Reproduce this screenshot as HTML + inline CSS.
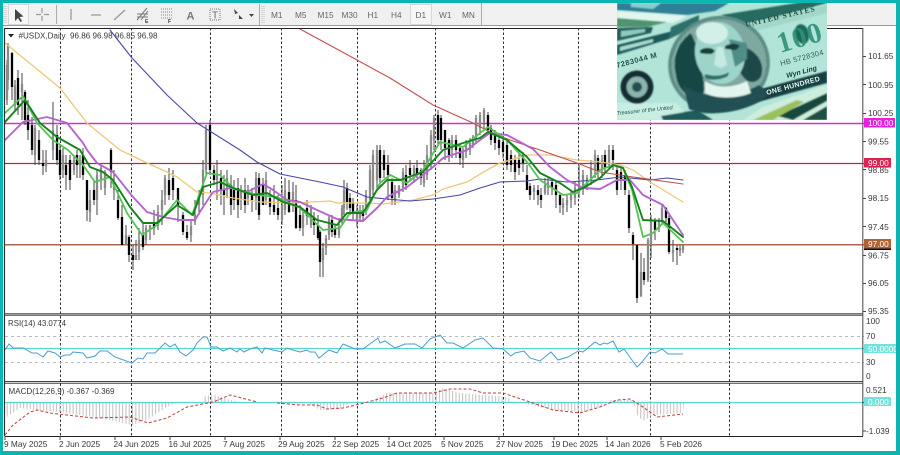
<!DOCTYPE html>
<html><head><meta charset="utf-8"><style>
html,body{margin:0;padding:0;background:#fff;width:900px;height:455px;overflow:hidden}
svg{display:block}
text{font-family:"Liberation Sans",sans-serif;font-size:8.3px;fill:#383838}
.t text{fill:#fff}
.s{font-size:7.9px}
</style></head><body>
<svg width="900" height="455" viewBox="0 0 900 455" xmlns="http://www.w3.org/2000/svg">
<defs>
<pattern id="h" width="3.3" height="10" patternUnits="userSpaceOnUse"><rect width="1.1" height="10" fill="#c4c4c4"/></pattern>
<pattern id="hatch" width="2.4" height="2.4" patternUnits="userSpaceOnUse" patternTransform="rotate(35)"><rect width="1" height="2.4" fill="#174441" opacity=".38"/></pattern>
<filter id="b" x="-5%" y="-5%" width="110%" height="110%"><feGaussianBlur stdDeviation="0.35"/></filter>
<filter id="b2"><feGaussianBlur stdDeviation="0.8"/></filter>
</defs>
<rect width="900" height="455" fill="#fff"/>
<!-- toolbar -->
<rect x="3" y="3" width="893" height="22" fill="#f0f0f0"/>
<rect x="3" y="25" width="893" height="1" fill="#9a9a9a"/>
<g filter="url(#b)">
<path d="M4 6v17M6 6v17M262 6v17M264 6v17" stroke="#bbb" stroke-dasharray="1 1" fill="none"/>
<rect x="8.500" y="4.500" width="20" height="20" fill="#f6f6f6" stroke="#d6d6d6"/>
<path d="M15 9l0 12 3-3 2.500 4 1.500-1-2.500-4 4-.5z" fill="#444"/>
<path d="M42 8v5M42 16v5M36 14.500h5M44 14.500h5" stroke="#999" fill="none" stroke-width="1.200"/>
<path d="M56.500 5v19M259.500 4v21M481.500 3v22" stroke="#aaa" fill="none"/>
<path d="M71 9v11M91 15h10M114 20l11-10" stroke="#999" stroke-width="1.300" fill="none"/>
<path d="M137 20l10-12M141 20l7-9M137 14h11M137 17h11" stroke="#777" fill="none"/>
<text x="145" y="23" style="font-size:5px;font-weight:bold">E</text>
<path d="M161 9h12M161 12h12M161 15h12M161 18h12" stroke="#888" stroke-dasharray="1 1" fill="none"/>
<text x="168" y="23" style="font-size:5px;font-weight:bold">F</text>
<text x="186.500" y="19.500" style="font-size:11px;font-weight:bold;fill:#777">A</text>
<rect x="210" y="9" width="10" height="11" fill="none" stroke="#777" stroke-dasharray="1 1"/>
<text x="212" y="18.500" style="font-size:10px;fill:#666">T</text>
<path d="M234 9l4 4-3 1zM239 15l4 4-4 0zM249 14h5l-2.500 3z" fill="#444"/>
<rect x="410.500" y="4.500" width="21" height="20" fill="#f6f6f6" stroke="#d6d6d6"/>
<g><text x="271" y="18" style="fill:#666">M1</text><text x="295" y="18" style="fill:#666">M5</text><text x="317.500" y="18" style="fill:#666">M15</text><text x="341.500" y="18" style="fill:#666">M30</text><text x="367.500" y="18" style="fill:#666">H1</text><text x="391" y="18" style="fill:#666">H4</text><text x="415.500" y="18" style="fill:#666">D1</text><text x="439" y="18" style="fill:#666">W1</text><text x="462" y="18" style="fill:#666">MN</text></g>
</g>
<!-- grid -->
<g filter="url(#b)">
<path d="M60.500 28V436M131.500 28V436M210.500 28V436M281.500 28V436M357.500 28V436M435.500 28V436M503.500 28V436M578.500 28V436M650.500 28V436M729.500 28V436" stroke="#333" stroke-dasharray="2.500 2" fill="none"/>
<!-- levels -->
<path d="M5 123.500H864" stroke="#d030d0" stroke-width="1.400"/>
<path d="M5 163.500H864" stroke="#b02a50" stroke-width="1.300"/>
<path d="M5 244.800H864" stroke="#a86a4e" stroke-width="1.500"/>
<!-- candles wicks -->
<path stroke="#444" stroke-width="1" fill="none" d="M7 60V105M8 43V90M12 52V100M15 80V110M18 70V115M22 73V120M25 90V125M28 100V140M32 117V155M35 125V165M39 130V165M43 150V175M46 150V172M53 102V160M57 125V165M60 145V180M63 148V178M66 155V190M70 155V190M74 155V175M77 150V178M80 155V178M83 148V180M87 180V221M90 190V222M94 180V205M97 170V215M101 165V190M105 170V195M111 148V188M114 170V200M118 190V220M122 205V245M126 225V245M129 235V262M133 245V270M136 240V260M139 228V260M143 222V250M146 225V245M150 225V240M154 210V235M158 205V230M162 190V225M165 175V205M169 168V200M173 170V200M178 188V222M183 212V235M187 225V240M191 220V242M195 200V225M199 190V215M203 160V205M206 125V175M210 120V175M214 165V185M217 160V200M221 170V205M224 175V215M227 170V198M231 175V215M234 180V210M238 178V218M241 185V210M245 178V213M248 185V205M252 188V212M256 172V210M259 173V220M263 178V205M266 172V205M270 190V215M274 185V215M278 195V220M282 185V225M285 178V215M289 180V213M293 182V212M296 185V229M300 205V231M303 210V236M307 200V225M311 205V228M314 212V235M318 215V240M320 230V277M323 243V277M326 235V255M329 215V240M332 215V237M335 225V238M339 220V238M342 205V225M344 180V215M347 183V210M350 193V215M353 198V220M357 205V227M360 205V222M363 205V222M366 190V215M370 165V205M373 150V195M377 145V190M380 145V185M384 150V178M388 155V200M392 178V205M395 185V205M399 185V198M403 168V192M406 165V190M410 160V182M414 165V183M417 160V178M421 168V185M424 160V187M427 145V180M431 130V170M434 115V150M438 110V145M441 115V150M445 130V160M449 138V162M452 135V158M456 135V158M460 145V165M463 148V168M466 140V158M470 138V155M473 135V148M476 115V143M480 112V135M484 108V130M488 112V135M491 125V145M495 130V150M499 135V155M503 138V158M507 140V170M511 150V172M515 155V180M519 150V175M523 152V172M527 165V190M530 183V200M534 185V200M538 185V205M541 188V208M545 178V195M548 178V195M552 178V195M556 180V208M560 193V213M563 198V215M567 195V212M571 190V208M575 182V205M579 165V198M583 170V195M587 175V190M591 160V185M595 150V178M598 155V178M602 155V178M605 150V172M609 145V168M613 145V170M617 163V195M621 165V190M625 170V195M629 190V233M633 232V260M637 245V303M641 253V297M644 258V285M648 238V282M651 215V258M655 218V240M659 218V232M662 205V225M666 207V222M669 215V254M673 240V262M677 245V265M680 245V256M683 245V253"/>
<path stroke="#000" stroke-width="2.300" fill="none" d="M12 53V87M18 78V105M25 92V120M28 115V130M32 125V150M39 140V160M43 163V166M57 135V160M60 150V175M66 165V175M70 160V180M77 155V165M83 155V175M87 180V210M94 190V200M111 150V172M118 200V218M122 217V245M129 237V255M133 255V260M143 235V247M154 222V228M169 180V195M173 178V190M178 188V205M183 215V232M187 232V238M210 125V170M214 170V180M221 178V190M224 190V195M231 185V205M234 190V200M238 188V205M245 190V205M252 193V200M259 178V215M263 185V205M270 198V207M274 205V212M278 208V215M289 192V212M296 200V228M300 215V228M307 208V216M314 218V225M318 225V238M320 232V262M332 220V232M335 228V235M347 188V202M350 198V208M353 203V212M363 210V216M380 150V178M384 155V170M388 165V175M392 182V198M406 175V185M410 168V175M417 168V174M421 170V178M438 115V140M441 118V140M445 130V148M449 140V155M456 140V150M460 148V158M488 115V130M491 128V140M495 135V143M499 140V148M503 142V152M507 145V165M511 155V165M515 160V172M519 160V168M523 155V163M527 175V190M530 186V195M538 190V195M541 195V200M552 182V188M556 185V195M560 195V205M598 158V172M605 155V168M613 150V160M617 170V190M621 172V180M625 175V190M629 195V228M633 235V244M637 245V298M644 272V280M655 220V230M666 208V218M669 218V252M677 248V250"/>
<path stroke="#8a8a8a" stroke-width="2.300" fill="none" d="M7 65V100M8 45V80M15 85V105M22 84V92M35 128V155M46 160V166M53 130V150M63 155V170M74 160V170M80 160V165M90 200V212M97 175V200M101 168V180M105 172V188M114 185V190M126 235V245M136 255V260M139 240V252M146 228V240M150 225V230M158 212V225M162 200V210M165 178V195M191 226V235M195 215V222M199 195V205M203 170V195M206 130V170M217 175V180M227 178V190M241 192V200M248 190V198M256 178V198M266 180V200M282 205V220M285 190V210M293 192V205M303 215V228M311 208V225M323 248V260M326 238V248M329 218V235M339 226V235M342 208V218M344 190V208M357 210V222M360 210V218M366 195V210M370 170V200M373 155V190M377 150V180M395 190V202M399 186V195M403 172V188M414 168V178M424 172V183M427 155V175M431 135V165M434 118V140M452 140V150M463 150V160M466 144V152M470 143V150M473 137V145M476 118V138M480 115V128M484 110V122M534 188V192M545 185V193M548 182V188M563 203V208M567 200V205M571 195V200M575 188V198M579 182V192M583 175V190M587 178V187M591 168V180M595 155V170M602 160V170M609 150V165M641 272V296M648 240V280M651 220V245M659 220V228M662 208V220M673 250V253M680 248V251M683 246V250"/>
<!-- MAs -->
<g fill="none" stroke-linejoin="round" stroke-linecap="round">
<path stroke="#ecc878" stroke-width="1.300" d="M5 43L60 88L87 123L120 150L147 163L167 172L177 177L197 192L210 193L233 198L260 202L293 203L330 201L337 203L367 203L383 204L413 200L433 195L443 189L467 182L487 170L500 163L527 155L550 155L577 160L600 162L620 165L633 170L650 182L683 202"/>
<path stroke="#4646a8" stroke-width="1.100" d="M110 30L132 58L167 95L197 123L240 150L257 162L280 174L300 178L320 182L343 187L367 197L387 199L410 201L433 199L460 195L480 188L500 182L527 181L540 179L567 182L597 180L620 177L650 180L667 178L683 180"/>
<path stroke="#c25050" stroke-width="1.100" d="M300 29L357 60L390 78L433 105L473 123L490 132L510 140L540 150L577 163L600 172L633 177L683 184"/>
<path stroke="#b565d0" stroke-width="1.900" d="M5 140L23 122L47 117L67 123L83 143L87 150L97 163L113 172L133 197L147 212L163 217L180 220L195 220L203 207L213 192L230 188L247 192L263 184L273 190L287 200L300 202L317 210L337 219L363 221L377 208L387 197L407 187L433 167L443 158L467 150L480 140L490 133L507 135L533 149L550 167L567 180L583 188L600 189L617 180L630 180L643 195L663 205L683 235"/>
<path stroke="#55c455" stroke-width="1.800" d="M5 113L23 96L37 123L53 140L68 150L83 165L95 182L110 177L127 213L142 235L157 225L177 200L192 215L207 173L220 175L233 188L257 195L277 197L300 208L323 230L340 228L350 213L367 210L380 183L390 175L407 183L423 170L440 142L463 147L480 133L488 127L507 140L527 162L540 180L563 195L577 193L587 183L600 170L613 165L623 168L632 190L643 237L653 233L663 223L683 242"/>
<path stroke="#12841a" stroke-width="1.900" d="M5 122L25 100L40 123L57 137L80 150L90 167L103 172L113 180L130 207L143 223L157 223L177 205L193 215L203 187L220 182L233 188L253 195L267 193L283 202L300 207L317 220L337 225L347 213L363 213L377 190L387 180L400 180L423 172L443 150L463 143L480 138L488 132L507 140L527 157L540 173L560 183L573 192L583 188L600 178L613 165L623 168L632 187L643 220L663 221L683 237"/>
</g>
<!-- RSI -->
<path d="M5 336.500H864M5 362.500H864" stroke="#bbb" stroke-dasharray="3 3"/>
<path d="M5 348.500H864" stroke="#5ad8d0" stroke-width="1.300"/>
<path fill="none" stroke="#4b9dd0" stroke-width="1" d="M5 350L9 344L13 348L23 348L32 353L37 353L43 357L48 351L55 353L60 357L65 355L70 355L73 352L83 353L87 358L95 356L100 351L107 351L115 357L132 363L138 358L143 359L147 353L155 353L165 343L170 347L175 344L180 352L186 356L193 350L197 343L203 337L207 337L211 347L217 347L223 351L230 348L237 352L240 349L244 352L250 349L257 347L262 353L265 348L273 350L282 352L287 348L293 350L300 352L307 350L310 352L315 352L319 358L329 350L337 353L343 344L355 349L363 349L378 338L380 343L385 341L395 348L405 344L415 344L422 348L430 339L440 335L447 343L453 343L463 348L475 340L483 338L493 348L503 349L511 356L515 353L524 351L530 358L540 361L551 352L558 360L568 357L578 351L583 352L595 342L600 345L604 343L607 344L613 341L619 352L624 349L637 367L642 362L650 352L655 353L662 349L668 354L683 354"/>
<!-- MACD -->
<polygon fill="url(#h)" points="5,402 7,417 20,408 37,410 60,412 100,418 132,425 147,420 167,407 178,402"/>
<polygon fill="url(#h)" points="203,402 203,397 213,394 230,400 240,402"/>
<polygon fill="url(#h)" points="305,402 320,410 340,409 352,402"/>
<polygon fill="url(#h)" points="373,402 373,400 387,393 433,393 443,388 460,393 507,397 513,402"/>
<polygon fill="url(#h)" points="520,402 530,405 553,410 583,412 600,407 606,402"/>
<polygon fill="url(#h)" points="610,402 610,400 633,400 635,402"/>
<polygon fill="url(#h)" points="633,402 637,415 643,421 653,415 683,413 684,402"/>
<path d="M5 402.500H864" stroke="#5ad8d0" stroke-width="1.300"/>
<path fill="none" stroke="#c03c3c" stroke-dasharray="3 2" d="M5 435L13 425L30 412L37 410L50 413L67 415L93 418L130 417L148 423L167 418L187 407L213 402L230 395L257 402M277 403L300 405L317 405L327 409L343 408L360 404L383 398L397 393L433 393L450 389L470 389L483 393L503 393L530 402L553 410L580 413L600 407L617 400L630 399L640 405L657 417L683 414"/>
<!-- borders -->
<path d="M4.500 28V436" stroke="#333" stroke-width="1.200" fill="none"/>
<path d="M5 28.500H863M5 436.500H863" stroke="#222" stroke-width="1.100"/>
<path d="M5 313.800H863M5 315.300H863M5 381.500H863M5 383.200H863" stroke="#444" stroke-width="1"/>
<path d="M862.800 28V436" stroke="#555" stroke-width="1.100"/>
<path d="M863 56.500h3M863 84.500h3M863 113.500h3M863 141.500h3M863 169.500h3M863 198.500h3M863 226.500h3M863 255.500h3M863 283.500h3M863 311.500h3M863 402.500h3M863 431h3M5 436v4M60 436v4M115 436v4M170 436v4M225 436v4M280 436v4M335 436v4M389 436v4M444 436v4M499 436v4M554 436v4M607 436v4M661 436v4" stroke="#444" fill="none"/>
<!-- label text -->
<path d="M8 34h6l-3 3.500z" fill="#222"/>
<text class="s" x="18.500" y="38.500" textLength="139" lengthAdjust="spacingAndGlyphs">#USDX,Daily&#160;&#160;96.86 96.98 96.85 96.98</text>
<text class="s" x="8" y="326" textLength="58" lengthAdjust="spacingAndGlyphs">RSI(14) 43.0774</text>
<text class="s" x="8.500" y="394" textLength="106" lengthAdjust="spacingAndGlyphs">MACD(12,26,9) -0.367 -0.369</text>
<g><text x="868" y="59">101.65</text><text x="868" y="88">100.95</text><text x="868" y="116">100.25</text><text x="868" y="144.500">99.55</text><text x="868" y="173">98.85</text><text x="868" y="201">98.15</text><text x="868" y="230">97.45</text><text x="868" y="258.500">96.75</text><text x="868" y="286">96.05</text><text x="868" y="314">95.35</text>
<text x="866" y="324">100</text><text x="866" y="339">70</text><text x="866" y="365">30</text><text x="866" y="379">0</text><text x="866" y="393">0.521</text><text x="866" y="434">-1.039</text></g>
<rect x="864" y="118" width="31" height="9.500" fill="#e520e0"/>
<rect x="864" y="158" width="27" height="9.500" fill="#dc2250"/>
<rect x="864" y="239" width="27" height="9.500" fill="#ae6236"/><rect x="864" y="248.500" width="27" height="1.500" fill="#111"/>
<rect x="864" y="344" width="32" height="9" fill="#72e2da"/>
<rect x="864" y="397" width="27" height="9" fill="#72e2da"/>
<g class="t"><text x="868" y="126">100.00</text><text x="868" y="166">99.00</text><text x="868" y="247">97.00</text><text x="868" y="352">50.0000</text><text x="868" y="405">0.000</text></g>
<g><text x="4" y="447">9 May 2025</text><text x="59" y="447">2 Jun 2025</text><text x="113.500" y="447">24 Jun 2025</text><text x="168.500" y="447">16 Jul 2025</text><text x="223" y="447">7 Aug 2025</text><text x="278" y="447">29 Aug 2025</text><text x="332" y="447">22 Sep 2025</text><text x="386.500" y="447">14 Oct 2025</text><text x="441" y="447">5 Nov 2025</text><text x="496" y="447">27 Nov 2025</text><text x="551" y="447">19 Dec 2025</text><text x="605" y="447">14 Jan 2026</text><text x="660" y="447">5 Feb 2026</text></g>
</g>
<!-- dollar image -->
<svg x="617" y="3" width="210" height="117" viewBox="0 0 210 117">
<rect width="210" height="117" fill="#b2e4d8"/>
<g filter="url(#b2)">
<polygon points="0,0 112,0 98,8 70,12 0,7" fill="#2f8095"/>
<polygon points="14,0 44,0 36,6 14,4" fill="#8accd0"/>
<polygon points="0,8 70,13 56,20 0,15" fill="#e0f6ee"/>
<polygon points="0,15 50,19 30,24 0,24" fill="#4f9470"/>
<polygon points="0,25 36,24 34,30 0,38" fill="#245f5c"/>
<polygon points="4,28 28,26 28,29 4,34" fill="#8fcabf"/>
<polygon points="0,42 56,28 52,36 0,52" fill="#1f5a58"/>
<polygon points="3,44 36,36 36,39 3,48" fill="#a8dcd0"/>
<polygon points="54,24 82,12 82,22 52,36" fill="#2e6f6a"/>
<polygon points="104,12 205,-4 210,0 128,22" fill="#276a60"/>
<polygon points="126,21 210,2 210,10 134,29" fill="#a2d6c6"/>
<polygon points="0,100 60,100 72,117 0,117" fill="#c8eee4"/>
<polygon points="44,113 80,107 96,117 46,117" fill="#1f5c5a"/>
<polygon points="146,104 210,82 210,117 126,117" fill="#cdeedd"/>
<polygon points="160,113 210,90 210,98 176,117" fill="#17493e"/>
<polygon points="186,117 210,103 210,117" fill="#1a5044"/>
<polygon points="136,117 180,97 187,99 156,117" fill="#9cc05c"/>
<polygon points="118,93 210,68 210,80 130,102" fill="#183f42"/>
</g>
<g filter="url(#b2)">
<ellipse cx="102" cy="61" rx="51" ry="48" fill="#5c8d85" transform="rotate(-15 102 61)"/>
<ellipse cx="102" cy="61" rx="47.500" ry="44.500" fill="#8fbab1" transform="rotate(-15 102 61)"/>
<ellipse cx="102" cy="61" rx="47.500" ry="44.500" fill="url(#hatch)" transform="rotate(-15 102 61)"/>
<path d="M74 30C60 40 55 56 59 72C60 86 72 98 86 92C90 76 80 62 80 44Z" fill="#184644"/>
<path d="M128 44C142 50 148 62 144 74C136 84 126 78 122 66Z" fill="#1b4846"/>
<ellipse cx="103" cy="50" rx="25" ry="31" fill="#9dd4ca" transform="rotate(-8 103 50)"/>
<ellipse cx="95" cy="30" rx="16" ry="11" fill="#d2f0e8"/>
<path d="M112 36l6 28 12-8 0-16z" fill="#4f8e86"/>
<path d="M83 47c5-3 12-3 15 1l-3 3c-4 0-8 0-12-1zM108 43c5-3 12-3 15 0l-4 4c-4 0-8-1-11-1z" fill="#153f3e"/>
<path d="M100 44l-3 18 7 3 6-3-4-18z" fill="#c4eae2"/>
<path d="M88 71c6 2 16 3 24-2l-1 4c-7 4-17 5-23 2z" fill="#2e6d68"/>
<path d="M66 82C86 96 116 96 142 82L152 90C140 108 90 116 72 106Z" fill="#205052"/>
<path d="M88 78C100 86 116 85 130 78L134 90C120 96 98 96 88 90Z" fill="#e2f5ee"/>
<circle cx="20" cy="84" r="16.500" fill="#152f30"/><circle cx="20" cy="84" r="10.500" fill="#8ab4ac"/><circle cx="20" cy="84" r="5" fill="#24504f"/>
<ellipse cx="185" cy="31" rx="7" ry="10" fill="#1d6a58" transform="rotate(-15 185 31)"/>
</g>
<g filter="url(#b)">
<text transform="translate(163 50) rotate(-16)" style="font-family:'Liberation Serif',serif;font-size:29px;font-weight:bold;fill:#2f9078" letter-spacing="1" opacity=".9">100</text>
<text transform="translate(0 65) rotate(-15)" style="font-size:7.500px;font-weight:bold;fill:#26564f" letter-spacing=".5">7283044 M</text>
<text transform="translate(164 63) rotate(-15)" style="font-size:7.500px;fill:#2d625a" letter-spacing=".3">HB 5728304</text>
<text transform="translate(170 75) rotate(-15)" style="font-size:7px;font-style:italic;font-weight:bold;fill:#173a36">Wyn Ling</text>
<text transform="translate(150 92) rotate(-15)" style="font-size:7px;font-weight:bold;fill:#eaf8f2" letter-spacing=".3">ONE HUNDRED</text>
<text transform="translate(129 24) rotate(-13)" style="font-family:'Liberation Serif',serif;font-size:7.500px;font-weight:bold;fill:#1d4f48" letter-spacing="1">UNITED STATES</text>
<text transform="translate(0 112) rotate(-6)" style="font-size:5.500px;font-style:italic;fill:#1f5048">Treasurer of the United</text>
</g>
</svg>
<!-- frame -->
<rect x="0" y="0" width="900" height="3" fill="#0db5b0"/>
<rect x="0" y="451" width="900" height="4" fill="#0db5b0"/>
<rect x="0" y="0" width="3" height="455" fill="#0db5b0"/>
<rect x="896" y="0" width="4" height="455" fill="#0db5b0"/>
</svg>
</body></html>
